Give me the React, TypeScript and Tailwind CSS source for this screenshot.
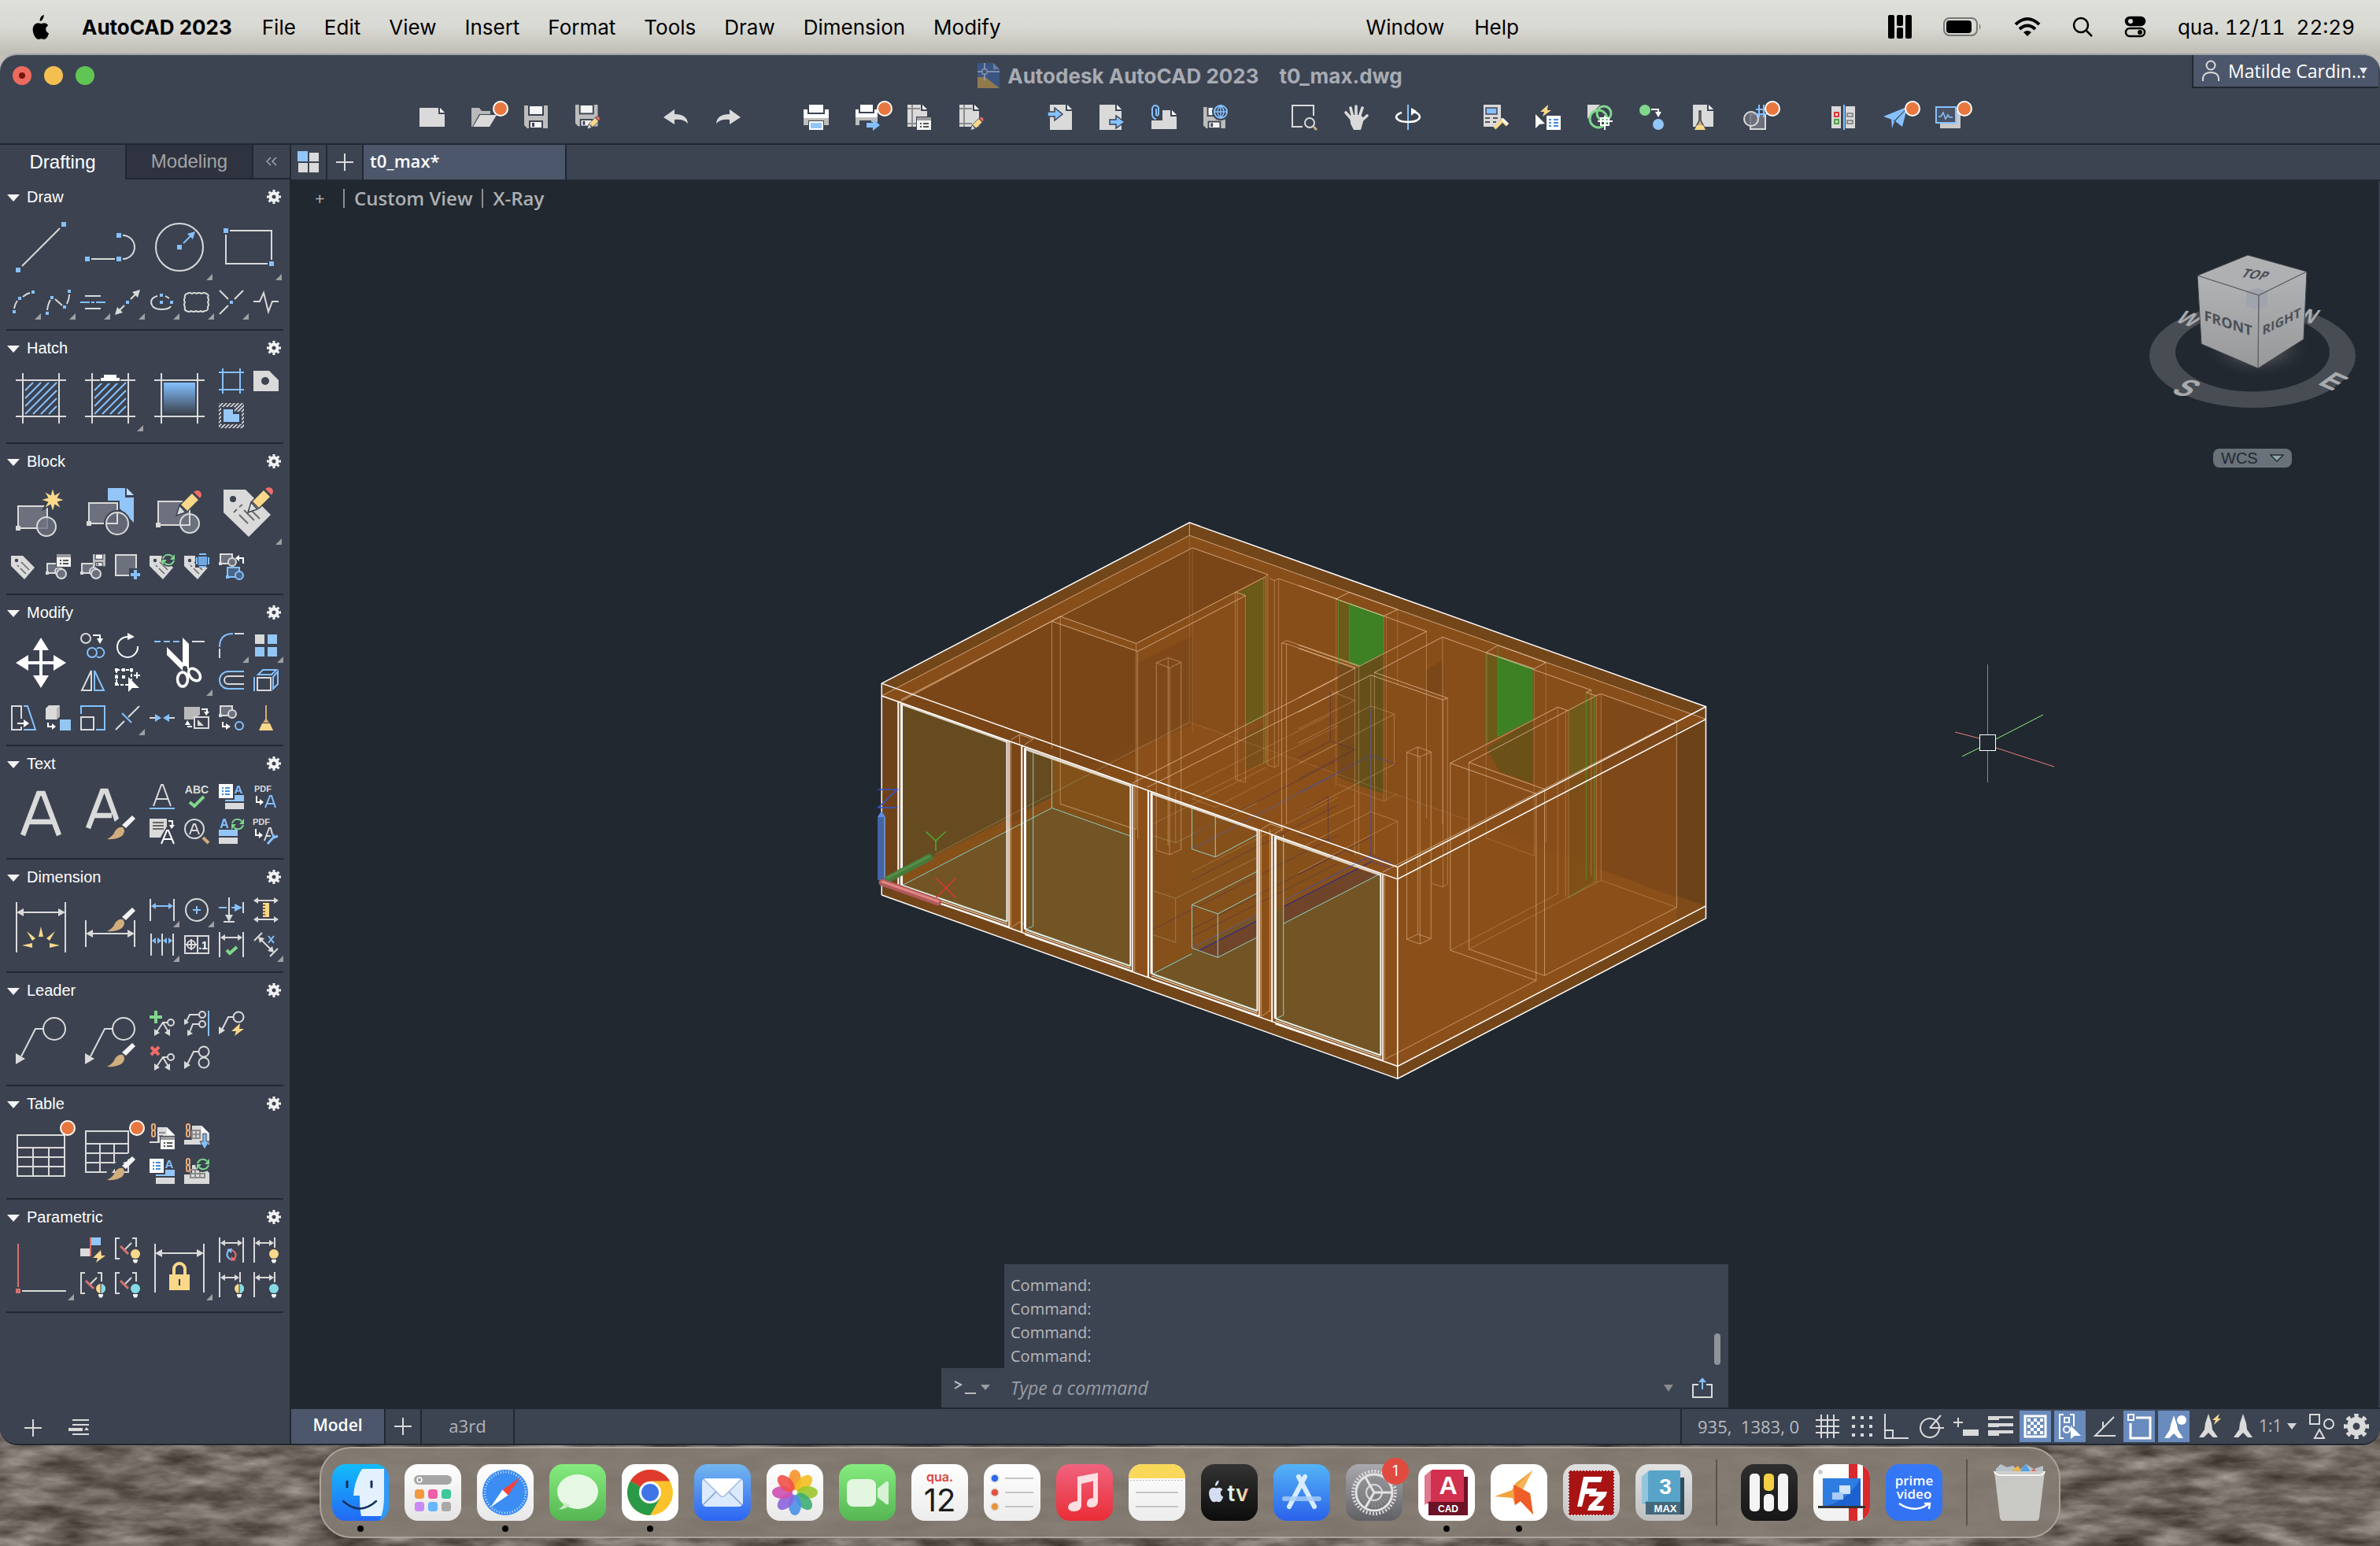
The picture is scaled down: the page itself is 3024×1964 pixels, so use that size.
import React from "react";

const LIGHT = "#dadada";
const BLUE = "#85c1ff";
const GOLD = "#f9d88a";
const GREEN = "#7fd78c";
const RED = "#ef6c69";
const PANEL = "#3c4351";
const GHOST = "#6d717e";

type Kids = { children?: React.ReactNode };

function Ico({ s = 32, children }: Kids & { s?: number }) {
  return (
    <svg viewBox={`0 0 ${s} ${s}`} width={s} height={s} fill="none" stroke={LIGHT} strokeWidth={2} aria-hidden="true" className="shrink-0 overflow-visible">
      {children}
    </svg>
  );
}

const L = ({ d, c = LIGHT, w = 2 }: { d: string; c?: string; w?: number }) => <path d={d} stroke={c} strokeWidth={w} />;
const F = ({ d, c = LIGHT }: { d: string; c?: string }) => <path d={d} fill={c} stroke="none" />;
const Sq = ({ x, y, c = BLUE, r = 3 }: { x: number; y: number; c?: string; r?: number }) => (
  <rect x={x - r} y={y - r} width={r * 2} height={r * 2} fill={c} stroke="none" />
);
const T = ({ x, y, s, c = LIGHT, b = 700, children }: Kids & { x: number; y: number; s: number; c?: string; b?: number }) => (
  <text x={x} y={y} fontSize={s} fill={c} stroke="none" fontWeight={b} textAnchor="middle" className="font-[Liberation_Sans,sans-serif]">
    {children}
  </text>
);
const Notice = ({ x, y }: { x: number; y: number }) => <circle cx={x} cy={y} r={9} fill="#e8773f" stroke="#fff" strokeWidth={2} />;

const Pencil = ({ x = 0, y = 0, k = 1 }: { x?: number; y?: number; k?: number }) => (
  <g transform={`translate(${x} ${y}) scale(${k})`} stroke={PANEL} strokeWidth={1.5}>
    <path d="M0 32 4 19 12 28Z" fill={LIGHT} />
    <path d="M5 18 20 3 29 12 14 27Z" fill={GOLD} />
    <path d="M21 2 Q26 -3 31 1 Q35 6 30 11Z" fill={RED} />
  </g>
);
const Brush = ({ x = 0, y = 0 }: { x?: number; y?: number }) => (
  <g transform={`translate(${x} ${y})`} stroke="none">
    <path d="M0 30 Q8 26 10 20 Q14 14 20 15 Q24 19 20 25 Q14 31 0 30Z" fill="#d0ad7c" />
    <path d="M19 12 32 0 36 4 24 16Z" fill="#f2f2f2" />
  </g>
);
const Refresh = ({ x, y, r = 7 }: { x: number; y: number; r?: number }) => (
  <g stroke={GREEN} strokeWidth={2}>
    <path d={`M${x - r} ${y - 1}A${r} ${r} 0 0 1 ${x + r - 2} ${y - 4}M${x + r} ${y + 1}A${r} ${r} 0 0 1 ${x - r + 2} ${y + 4}`} />
    <path d={`M${x + r + 1} ${y - 7}v7h-6ZM${x - r - 1} ${y + 7}v-7h6Z`} fill={GREEN} stroke="none" />
  </g>
);
const Tag = () => (
  <>
    <F d="M0 2H15L30 17 17 32 0 15Z" />
    <circle cx={7} cy={8} r={2.2} fill={PANEL} stroke="none" />
    <path d="M8 14 10 16M12 18 19 25M13 10 23 20" stroke="#6b6b6b" strokeWidth={1.6} />
  </>
);
const MiniBlock = ({ x = 0, y = 0, c = LIGHT, f = GHOST }: { x?: number; y?: number; c?: string; f?: string }) => (
  <g transform={`translate(${x} ${y})`} stroke={c}>
    <rect x={2} y={1} width={15} height={12} fill={f} />
    <circle cx={17} cy={11} r={5} fill={f} />
    <rect x={0} y={11} width={4} height={4} fill={c} stroke="none" />
  </g>
);
const Disk = ({ x = 0, y = 0, k = 1 }: { x?: number; y?: number; k?: number }) => (
  <g transform={`translate(${x} ${y}) scale(${k})`} stroke="none">
    <path d="M0 0H30V29H4L0 25Z" fill="#bdbdbd" />
    <rect x={6} y={0} width={18} height={12} fill="#f5f5f5" stroke={PANEL} strokeWidth={2} />
    <rect x={7} y={20} width={16} height={9} fill="#f5f5f5" stroke={PANEL} strokeWidth={2} />
    <rect x={10} y={22} width={3} height={5} fill={PANEL} />
  </g>
);
const Card = ({ x, y }: { x: number; y: number }) => (
  <g transform={`translate(${x} ${y})`} stroke="none">
    <rect x={-1} y={-1} width={20} height={18} fill={PANEL} />
    <rect width={18} height={16} fill="#f3f3f3" />
    <rect width={18} height={4} fill="#9b9b9b" />
    <path d="M4 7h2v2h-2zM8 7h7v2h-7zM4 11h2v2h-2zM8 11h7v2h-7z" fill="#555" />
  </g>
);
const Bulb = ({ x, y, two = false, c = GOLD }: { x: number; y: number; two?: boolean; c?: string }) => (
  <g stroke="none">
    <circle cx={x} cy={y} r={7.5} fill={PANEL} />
    <circle cx={x} cy={y} r={6} fill={c} />
    {two && <path d={`M${x} ${y - 6}A6 6 0 0 1 ${x} ${y + 6}Z`} fill="#84dbe6" />}
    {two && <rect x={x - 0.5} y={y - 6} width={1} height={12} fill={PANEL} />}
    <path d={`M${x - 3} ${y + 7}h6v2l-1.500 2.500h-3l-1.500-2.500Z`} fill="#f4f4f4" />
  </g>
);
const Chain = () => <path d="M3 2q0-2 2-2t2 2v3q0 3-2 3t-2 3v3q0 2 2 2t2-2v-3q0-3-2-3t-2-3Z" stroke="#e9ab7c" strokeWidth={2} />;
const Person = () => (
  <Ico s={28}>
    <circle cx={14} cy={7} r={5.5} />
    <path d="M4 27V23Q5 16 14 16T24 23V27" />
  </Ico>
);
const Gear = ({ s = 18, c = "#f2f2f2" }: { s?: number; c?: string }) => (
  <svg viewBox="0 0 18 18" width={s} height={s} fill="none" stroke={c} aria-hidden="true">
    <circle cx={9} cy={9} r={4.6} strokeWidth={4.2} />
    <circle cx={9} cy={9} r={7.6} strokeWidth={3} pathLength={16} strokeDasharray="1 1" strokeDashoffset={0.5} />
  </svg>
);
const DimBar = ({ y, x1, x2, h1, h2, c = LIGHT }: { y: number; x1: number; x2: number; h1: number; h2: number; c?: string }) => (
  <>
    <path d={`M${x1} ${h1}V${h2}M${x2} ${h1}V${h2}`} />
    <path d={`M${x1 + 4} ${y}H${x2 - 4}`} stroke={c} />
    <path d={`M${x1 + 1} ${y}l6-4v8ZM${x2 - 1} ${y}l-6-4v8Z`} fill={c} stroke="none" />
  </>
);
const Sheet = ({ x = 0, y = 0, w = 24, h = 30 }: { x?: number; y?: number; w?: number; h?: number }) => (
  <g transform={`translate(${x} ${y})`} stroke="none">
    <path d={`M0 0H${w - 8}V8H${w}V${h}H0Z`} fill={LIGHT} />
    <path d={`M${w - 6} 0L${w} 6H${w - 6}Z`} fill="#fff" />
  </g>
);
const Cloud = "M4 5q3-2 6 0q3-2 6 0q3-2 6 0q3-2 6 0q4 1 2 5q2 3 0 6q2 3 0 6q1 5-4 5q-3 2-5 0q-3 2-6 0q-3 2-6 0q-3 2-6 0q-3-1-2-5q-2-3 0-6q-2-3 0-6q-1-4 3-5Z";

type Tool = { n: string; i: React.ReactNode; big?: boolean; fly?: boolean; start?: boolean };
type Group = { title: string; rows: Tool[][] };

const hatchFrame = "M9 0V64M55 0V64M0 9H64M0 55H64";
const hatchLines = "M12 22 22 12M12 32 32 12M12 42 42 12M12 52 52 12M22 52 52 22M32 52 52 32M42 52 52 42";

const groups: Group[] = [
  {
    title: "Draw",
    rows: [
      [
        { n: "Line", big: true, i: <Ico s={64}><L d="M8 56 56 8" /><Sq x={3} y={61} /><Sq x={61} y={3} /></Ico> },
        { n: "Polyline", big: true, i: <Ico s={64}><L d="M8 47H38M48 47A15 15 0 0 0 48 17" /><Sq x={3} y={47} /><Sq x={43} y={47} /><Sq x={43} y={17} /></Ico> },
        { n: "Circle", big: true, fly: true, i: <Ico s={64}><circle cx={32} cy={32} r={30} /><L d="M37 27 47 17" c={BLUE} /><F d="M52 12 42 15 49 22Z" c={BLUE} /><Sq x={32} y={32} /></Ico> },
        { n: "Rectangle", big: true, fly: true, i: <Ico s={64}><L d="M8 11H61V48M56 53H3V16" /><Sq x={3} y={11} /><Sq x={61} y={53} /></Ico> },
      ],
      [
        { n: "Arc", fly: true, i: <Ico><L d="M4 24Q5 18 8 14M15 9Q20 5 24 4" /><Sq x={4} y={28} r={2} /><Sq x={11} y={11} r={2} /><Sq x={28} y={3} r={2} /></Ico> },
        { n: "Spline", fly: true, i: <Ico><L d="M2 26Q3 18 6 13M12 12 21 20M27 18Q30 12 30 6" /><Sq x={2} y={30} r={2} /><Sq x={8} y={10} r={2} /><Sq x={24} y={22} r={2} /><Sq x={30} y={2} r={2} /></Ico> },
        { n: "Multiline", fly: true, i: <Ico><L d="M6 8H26M6 24H26" /><L d="M0 16H12M14 16H18M20 16H32" c={BLUE} /></Ico> },
        { n: "Construction line", fly: true, i: <Ico><L d="M5 27 12 20M20 12 27 5" /><F d="M32 0 22 3 29 10ZM0 32 3 22 10 29Z" /><Sq x={16} y={16} r={2} /></Ico> },
        { n: "Ellipse", fly: true, i: <Ico><L d="M10 8Q2 10 2 16Q3 25 15 25Q25 25 27 21M20 8 25 11" /><Sq x={15} y={7} r={2} /><Sq x={15} y={16} r={2} /><Sq x={28} y={16} r={2} /></Ico> },
        { n: "Revision cloud", fly: true, i: <Ico><L d={Cloud} /></Ico> },
        { n: "Point", fly: true, i: <Ico><L d="M1 1 12 12M31 1 20 12M1 31 12 20" /><Sq x={16} y={16} r={2} /></Ico> },
        { n: "Break line", i: <Ico><L d="M0 15H8L13 4 19 28 24 15H32" /></Ico> },
      ],
    ],
  },
  {
    title: "Hatch",
    rows: [
      [
        { n: "Hatch", big: true, i: <Ico s={64}><L d={hatchFrame} /><L d={hatchLines} c={BLUE} /></Ico> },
        { n: "Hatch recent", big: true, fly: true, i: <Ico s={64}><L d={hatchFrame} /><L d={hatchLines} c={BLUE} /><rect x={19} y={1} width={26} height={12} fill={PANEL} stroke="none" /><F d="M24 2H40V6H44V10H20V6H24Z" c="#fff" /></Ico> },
        {
          n: "Gradient", big: true,
          i: (
            <Ico s={64}>
              <defs><linearGradient id="grad" x1="0" y1="0" x2="0" y2="1"><stop offset="0" stopColor={BLUE} /><stop offset="1" stopColor={PANEL} /></linearGradient></defs>
              <L d={hatchFrame} /><rect x={12} y={12} width={40} height={40} fill="url(#grad)" stroke="none" />
            </Ico>
          ),
        },
        { n: "Boundary", i: <Ico><L d="M5 0V32M27 0V32M0 5H32M0 27H32" c={BLUE} /></Ico> },
        { n: "Wipeout", i: <Ico><F d="M0 3H20L32 15V29H0Z" /><circle cx={15} cy={16} r={5} fill={PANEL} stroke="none" /></Ico> },
        {
          n: "Region",
          i: (
            <Ico>
              <defs><pattern id="rim" width="5" height="5" patternUnits="userSpaceOnUse"><path d="M-1 6 6 -1M-1 1 1 -1M4 6 6 4" stroke={LIGHT} strokeWidth={1.6} /></pattern></defs>
              <rect width={32} height={32} fill="url(#rim)" stroke="none" /><F d="M3 5H20V11H29V27H3Z" c={PANEL} /><F d="M6 8H18V14H26V24H6Z" c="#96c8f8" />
            </Ico>
          ),
        },
      ],
    ],
  },
  {
    title: "Block",
    rows: [
      [
        { n: "Create block", big: true, i: <Ico s={64}><rect x={3} y={25} width={37} height={28} fill={GHOST} /><Sq x={3} y={53} c={LIGHT} /><circle cx={39} cy={51} r={12} fill={GHOST} fillOpacity={0.8} /><path d="M47 0 50 10 59 5 54 14 64 17 54 20 59 29 50 24 47 34 44 24 35 29 40 20 30 17 40 14 35 5 44 10Z" fill={GOLD} stroke={PANEL} /></Ico> },
        { n: "Insert block", big: true, i: <Ico s={64}><F d="M29 2H51V14H62V46L44 28 29 20Z" c="#93c6f8" /><F d="M53 2 62 11H53Z" c="#c6e1ff" /><rect x={2} y={18} width={42} height={32} fill={PANEL} stroke="none" /><rect x={5} y={21} width={36} height={26} fill={GHOST} /><circle cx={41} cy={47} r={17} fill={PANEL} stroke="none" /><path d="M26 47H41V33" /><circle cx={41} cy={47} r={14} fill={GHOST} fillOpacity={0.8} /><L d="M41 33V47H27" /><Sq x={5} y={47} c={LIGHT} /></Ico> },
        { n: "Edit block", big: true, i: <Ico s={64}><rect x={5} y={19} width={40} height={30} fill={GHOST} /><Sq x={5} y={49} c={LIGHT} /><circle cx={45} cy={47} r={12} fill={GHOST} /><L d="M45 35V49H33" /><Pencil x={28} y={5} /></Ico> },
        { n: "Edit attributes", big: true, fly: true, i: <Ico s={64}><F d="M0 4H28L60 36 32 64 0 33Z" /><circle cx={12} cy={16} r={4} fill={PANEL} stroke="none" /><path d="M13 33 17 29M20 26 24 23M20 36 31 47M26 30 39 43M35 30 46 41" stroke="#6b6b6b" /><Pencil x={31} y={1} /></Ico> },
      ],
      [
        { n: "Define attribute", i: <Ico><Tag /></Ico> },
        { n: "Block palette", i: <Ico><MiniBlock x={0} y={11} /><circle cx={20} cy={25} r={6} fill={GHOST} /><Card x={14} y={0} /></Ico> },
        { n: "Write block", i: <Ico><MiniBlock x={0} y={11} /><circle cx={20} cy={25} r={6} fill={GHOST} /><Disk x={16} y={0} k={0.53} /></Ico> },
        { n: "Add block", i: <Ico><rect x={1} y={1} width={26} height={26} fill={GHOST} /><F d="M18 18H32V32H18Z" c={PANEL} /><F d="M24 20h4v4h4v4h-4v4h-4v-4h-4v-4h4Z" c={BLUE} /></Ico> },
        { n: "Sync attributes", i: <Ico><Tag /><circle cx={24} cy={7} r={9} fill={PANEL} stroke="none" /><Refresh x={24} y={7} /></Ico> },
        { n: "Attribute display", i: <Ico><Tag /><rect x={14} y={0} width={18} height={17} fill={PANEL} stroke="none" /><rect x={18} y={3} width={11} height={11} fill="#6ea9e6" stroke="none" /><L d="M19 0H28M19 16H28M16 4V13M31 4V13" c={BLUE} /></Ico> },
        { n: "Replace block", i: <Ico><MiniBlock x={0} y={-1} /><MiniBlock x={9} y={16} c={BLUE} f="#4a6687" /><L d="M25 5H31V12" c="#fff" /><F d="M26 1V9L21 5Z" c="#fff" /></Ico> },
      ],
    ],
  },
  {
    title: "Modify",
    rows: [
      [
        { n: "Move", big: true, i: <Ico s={64}><L d="M32 10V54M10 32H54" w={4} c="#fff" /><F d="M32 0 42 16H22ZM32 64 42 48H22ZM0 32 16 22V42ZM64 32 48 22V42Z" c="#fff" /></Ico> },
        { n: "Copy", i: <Ico><circle cx={7} cy={7} r={6} /><L d="M16 3H25V9" c="#fff" /><F d="M21 7H29L25 14Z" c="#fff" /><circle cx={15} cy={25} r={6} stroke={BLUE} /><L d="M21 20A6 6 0 1 1 21 30" c={BLUE} /></Ico> },
        { n: "Rotate", i: <Ico><L d="M29 17A13 13 0 1 1 17 5" c="#fff" /><F d="M16 0V9L25 5Z" c="#fff" /></Ico> },
        { n: "Trim", big: true, fly: true, i: <Ico s={64}><L d="M0 5H8M12 5H20M24 5H32" c={BLUE} /><L d="M48 5H64" /><F d="M36 0 44 8V40H36ZM16 12 38 34 36 42 16 22Z" c="#fff" /><ellipse cx={36} cy={53} rx={6.5} ry={9} stroke="#fff" strokeWidth={3.5} /><ellipse cx={51} cy={47} rx={6} ry={9} stroke="#fff" strokeWidth={3.5} transform="rotate(-42 51 47)" /><circle cx={39} cy={39} r={3} fill={PANEL} stroke="none" /></Ico> },
        { n: "Fillet", fly: true, i: <Ico><L d="M1 18Q1 1 18 1" c={BLUE} /><L d="M20 1H32M1 20V32" /></Ico> },
        { n: "Array", fly: true, i: <Ico><F d="M2 2H14V14H2Z" /><F d="M18 2H30V14H18ZM2 18H14V30H2ZM18 18H30V30H18Z" c="#93c6f5" /></Ico> },
        { n: "Mirror", i: <Ico><path d="M14 4V29H2Z" /><path d="M18 4V29H30Z" stroke={BLUE} /></Ico> },
        { n: "Stretch", i: <Ico><path d="M2 3H21V22H2Z" stroke="#fff" strokeDasharray="4 2" /><F d="M0 1h4v4h-4zM9 1h4v4h-4zM19 1h4v4h-4zM0 10h4v4h-4zM9 10h4v4h-4zM0 19h4v4h-4z" c="#fff" /><F d="M17 12V31L22 26H31Z" c="#fff" /><L d="M24 10H32M28 6V14" c="#fff" /></Ico> },
        { n: "Offset", i: <Ico><L d="M32 5H12A11 11 0 0 0 12 27H32" c={BLUE} /><L d="M32 11H12A5 5 0 0 0 12 21H32" /></Ico> },
        { n: "Explode", i: <Ico><rect x={5} y={13} width={17} height={16} /><path d="M6 9 12 3H29L23 9Z" stroke={BLUE} /><path d="M25 12 31 5V21L25 27ZM1 12V30" stroke={BLUE} /></Ico> },
      ],
      [
        { n: "Edit geometry", i: <Ico><path d="M13 17V1H1V31H13V27" /><path d="M16 1H21L31 31H16" stroke={BLUE} /><L d="M8 23H18" c="#fff" /><F d="M16 18 23 23 16 28Z" c="#fff" /></Ico> },
        { n: "Solid edit", i: <Ico><F d="M0 4 4 0H18V14L14 18H0Z" /><F d="M14 4 18 0V14L14 18Z" c="#b5b5b5" /><F d="M18 18H32V32H18Z" c="#93c6f0" /><L d="M3 22V27H9" c="#fff" /><F d="M8 23 13 27 8 31Z" c="#fff" /></Ico> },
        { n: "Scale", i: <Ico><L d="M1 11V1H31V31H20" c={BLUE} /><rect x={1} y={15} width={16} height={16} /></Ico> },
        { n: "Lengthen", fly: true, i: <Ico><L d="M1 31 12 20M17 15 31 1" /><L d="M9 10 21 22" c={BLUE} /></Ico> },
        { n: "Join", i: <Ico><L d="M0 16H8M24 16H32" /><F d="M7 11 15 16 7 21ZM25 11 17 16 25 21Z" c={BLUE} /></Ico> },
        { n: "Change space", i: <Ico><F d="M0 2H20V12L11 18H0Z" c="#b9b9b9" /><rect x={13} y={15} width={18} height={14} /><F d="M17 18V26H25Z" /><L d="M22 5H29V9M4 27H10" c="#fff" /><F d="M25 8H32L28 13ZM1 25 4 19 8 25Z" c="#fff" /></Ico> },
        { n: "Copy nested", i: <Ico><MiniBlock /><circle cx={26} cy={26} r={5} stroke={BLUE} /><L d="M5 21V27H10" c="#fff" /><F d="M9 23 15 27 9 31Z" c="#fff" /></Ico> },
        { n: "Purge", i: <Ico><L d="M16 0V18" c="#d0ad7c" /><F d="M16 16 20 22H12Z" c="#d0ad7c" /><F d="M11 23H21L25 32H7Z" c={GOLD} /></Ico> },
      ],
    ],
  },
  {
    title: "Text",
    rows: [
      [
        { n: "Multiline text", big: true, i: <Ico s={64}><path d="M9 59 29 6H35L55 59M16 42H48" strokeWidth={6.5} /></Ico> },
        { n: "Text style", big: true, i: <Ico s={64}><path d="M4 50 22 3H27L42 44M10 34H34" strokeWidth={6.5} /><path d="M26 64 34 48 62 26" stroke={PANEL} strokeWidth={5} /><Brush x={28} y={34} /></Ico> },
        { n: "Single line text", i: <Ico><L d="M5 28 15 1H17L27 28M9 19H23" /><L d="M0 31H32" c={BLUE} /></Ico> },
        { n: "Spell check", i: <Ico><T x={16} y={12} s={14}>ABC</T><L d="M7 23 13 28 25 16" c={GREEN} w={4} /></Ico> },
        { n: "Text frame", i: <Ico><rect width={18} height={18} fill="#fff" stroke="none" /><path d="M4 5H6M8 5H14M4 9H6M8 9H14M4 13H6M8 13H14" stroke="#3e8be0" /><T x={25} y={12} s={15} c={BLUE}>A</T><F d="M20 14H32V22H8V20H20Z" c="#93c6f8" /><F d="M8 24H32V32H8Z" /></Ico> },
        { n: "Import PDF text", i: <Ico><T x={12} y={10} s={11}>PDF</T><L d="M4 15V23H9" c="#fff" /><F d="M8 19 13 23 8 27Z" c="#fff" /><L d="M15 30 21 15H23L28 30M17 25H26" c={BLUE} /></Ico> },
        { n: "Convert text", i: <Ico><F d="M0 0H22V10L16 20 14 24H0Z" /><path d="M4 5H18M4 9H18M4 13H18" stroke="#666" /><L d="M24 3H29V9" c="#fff" /><F d="M25 8H32L28 13Z" c="#fff" /><L d="M15 32 22 15H24L31 32M18 26H28" c="#fff" /></Ico> },
        { n: "Find text", i: <Ico><circle cx={13} cy={13} r={12} /><L d="M7 20 12 7H14L19 20M9 15H17" /><L d="M24 24 31 31" c="#d0ad7c" w={4} /></Ico> },
        { n: "Update field", i: <Ico><T x={7} y={12} s={16} c={BLUE}>A</T><Refresh x={24} y={7} /><F d="M0 14H24V22H0Z" c="#93c6f8" /><F d="M0 24H24V32H0Z" /></Ico> },
        { n: "PDF settings", i: <Ico><T x={10} y={8} s={11}>PDF</T><L d="M3 13V21H8" c="#fff" /><F d="M7 17 12 21 7 25Z" c="#fff" /><L d="M14 28 20 12H22L24 20M16 22H22" /><L d="M18 32 27 22M25 20 26 24 31 22" c={BLUE} w={3} /></Ico> },
      ],
    ],
  },
  {
    title: "Dimension",
    rows: [
      [
        { n: "Dimension", big: true, i: <Ico s={64}><L d="M1 0V64M63 0V64M8 13H56" /><F d="M1 13 10 8V18ZM63 13 54 8V18Z" /><F d="M32 31 35 44H29ZM14 37 25 46 21 49ZM50 37 39 46 43 49ZM8 55 21 52V58ZM56 55 43 52V58Z" c={GOLD} /></Ico> },
        { n: "Dimension style", big: true, i: <Ico s={64}><L d="M1 23V57M63 23V57M8 40H56" /><F d="M1 40 10 35V45ZM63 40 54 35V45Z" /><Brush x={28} y={7} /></Ico> },
        { n: "Linear", fly: true, i: <Ico><DimBar y={11} x1={1} x2={31} h1={2} h2={30} c={BLUE} /></Ico> },
        { n: "Center mark", fly: true, i: <Ico><circle cx={16} cy={16} r={14} /><L d="M11 16H21M16 11V21" c={BLUE} /></Ico> },
        { n: "Ordinate", i: <Ico><L d="M13 0V24M6 31H20M31 6V20" /><F d="M8 22H18L13 31Z" /><L d="M0 13H10M16 13H22" c={BLUE} /><F d="M20 8 30 13 20 18Z" c={BLUE} /></Ico> },
        { n: "Dimension update", i: <Ico><L d="M4 4H28M4 28H28" /><F d="M0 4 6 0V8ZM32 4 26 0V8ZM0 28 6 24V32ZM32 28 26 24V32Z" /><F d="M12 7H20V25H12Z" c={GOLD} /><path d="M12 10H15M12 14H15M12 18H15M12 22H15" stroke="#8a6d33" /></Ico> },
        { n: "Continue", fly: true, i: <Ico><L d="M2 2V30M16 2V30M30 2V30" /><F d="M3 11 8 7V15ZM15 11 10 7V15ZM17 11 22 7V15ZM29 11 24 7V15Z" c={BLUE} /></Ico> },
        { n: "Tolerance", i: <Ico><rect x={1} y={5} width={30} height={22} /><L d="M17 5V27" /><circle cx={9} cy={16} r={5} /><L d="M2 16H16M9 9V23" /><T x={24} y={22} s={14} c="#fff">.1</T></Ico> },
        { n: "Inspect", i: <Ico><DimBar y={7} x1={1} x2={31} h1={0} h2={32} /><L d="M10 23 14 27 23 19" c={GREEN} w={4} /></Ico> },
        { n: "Oblique", fly: true, i: <Ico><L d="M1 11 11 1M21 31 31 21M10 10 22 22" /><F d="M6 6 14 8 8 14ZM26 26 18 24 24 18Z" /><L d="M19 5 26 14M26 5 19 14" c={BLUE} /></Ico> },
      ],
    ],
  },
  {
    title: "Leader",
    rows: [
      [
        { n: "Multileader", big: true, i: <Ico s={64}><circle cx={49} cy={17} r={14} /><L d="M35 17H25L7 52" /><F d="M0 48 12 55 0 62Z" /></Ico> },
        { n: "Leader style", big: true, i: <Ico s={64}><circle cx={49} cy={17} r={14} /><L d="M35 17H25L7 52" /><F d="M0 48 12 55 0 62Z" /><Brush x={28} y={35} /></Ico> },
        { n: "Add leader", i: <Ico><F d="M6 0h4v6h6v4h-6v6h-4v-6h-6v-4h6Z" c={GREEN} /><circle cx={27} cy={15} r={4} /><L d="M22 15H17L9 27M17 15 24 27" /><F d="M6 32V23L13 28ZM26 32V23L19 28Z" /></Ico> },
        { n: "Align leaders", i: <Ico><L d="M31 0V32" c={BLUE} /><circle cx={23} cy={5} r={4} /><circle cx={23} cy={17} r={4} /><L d="M19 5H7L3 13M19 17H11L7 27" /><F d="M0 18V10L6 15ZM4 32V24L11 29Z" /></Ico> },
        { n: "Leader edit", i: <Ico><circle cx={25} cy={8} r={6.500} /><L d="M18 8H12L4 24" /><F d="M0 30V20L8 25Z" /><F d="M27 16 16 26H22L20 32 32 23H26Z" c={GOLD} /></Ico> },
        { n: "Remove leader", start: true, i: <Ico><L d="M2 2 12 12M12 2 2 12" c={RED} w={4} /><circle cx={27} cy={15} r={4} /><L d="M22 15H17L9 27M17 15 24 27" /><F d="M6 32V23L13 28ZM26 32V23L19 28Z" /></Ico> },
        { n: "Collect leaders", i: <Ico><circle cx={25} cy={8} r={6.500} /><circle cx={25} cy={22} r={6.500} /><L d="M18 8H12L4 24" /><F d="M0 30V20L8 25Z" /></Ico> },
      ],
    ],
  },
  {
    title: "Table",
    rows: [
      [
        { n: "Table", big: true, i: <Ico s={64}><path d="M2 8H62V60H2ZM2 24H62M2 36H62M2 48H62M22 24V60M42 24V60" /><Notice x={66} y={-1} /></Ico> },
        { n: "Table style", big: true, i: <Ico s={64}><path d="M1 3H55V55H1ZM1 19H55M1 31H55M1 43H55M19 19V55M37 19V55" /><path d="M26 64 34 50 62 30" stroke={PANEL} strokeWidth={6} /><Brush x={28} y={35} /><Notice x={66} y={-1} /></Ico> },
        { n: "Data link", i: <Ico><F d="M10 4H22L32 14V24H0V22H10Z" /><F d="M22 4 32 14H22Z" c="#fff" /><path d="M12 11H20M12 15H17" stroke="#8b8b8b" /><Chain /><Card x={14} y={16} /></Ico> },
        { n: "Download link", i: <Ico><F d="M10 2H22L32 12V26H0V20H10Z" /><F d="M22 2 32 12H22Z" c="#fff" /><path d="M10 8H20V18H10ZM10 13H20M15 8V18" stroke="#8b8b8b" /><Chain /><path d="M24 12H28V22H32L26 32 20 22H24Z" fill={BLUE} stroke={PANEL} strokeWidth={1} /></Ico> },
        { n: "Extract data", start: true, i: <Ico><rect width={18} height={18} fill="#fff" stroke="none" /><path d="M4 5H6M8 5H14M4 9H6M8 9H14M4 13H6M8 13H14" stroke="#3e8be0" /><T x={25} y={12} s={15} c={BLUE}>A</T><F d="M20 14H32V22H8V20H20Z" c="#93c6f8" /><F d="M8 24H32V32H8Z" /></Ico> },
        { n: "Update table", i: <Ico><F d="M10 8H22L32 18V32H0V20H10Z" /><path d="M8 14H20V24H8ZM8 19H26V24H20M14 14V24" stroke="#8b8b8b" /><Chain /><circle cx={24} cy={7} r={10} fill={PANEL} stroke="none" /><Refresh x={24} y={7} /></Ico> },
      ],
    ],
  },
  {
    title: "Parametric",
    rows: [
      [
        { n: "Geometric constraint", big: true, fly: true, i: <Ico s={64}><L d="M3 2V57" c="#d6726e" /><L d="M8 62H64" /><Sq x={3} y={62} c="#d6726e" /></Ico> },
        { n: "Auto constrain", i: <Ico><F d="M0 14H12V24H0Z" /><F d="M14 0H26V10H14Z" c="#93c6f8" /><L d="M13 0V24" c="#d6726e" /><F d="M26 16 16 26H22L20 32 32 23H27Z" c={GOLD} /></Ico> },
        { n: "Show constraint", i: <Ico><L d="M6 1H1V27H6M22 1H27V12" /><L d="M7 11 17 21" c="#d6726e" w={3} /><L d="M13 15 21 7" /><Bulb x={26} y={21} /></Ico> },
        {
          n: "Dimensional constraint", big: true, fly: true,
          i: <Ico s={64}><L d="M1 2V64M63 2V64M8 14H56" /><F d="M1 14 10 9V19ZM63 14 54 9V19Z" /><path d="M25 42V34A7 7 0 0 1 39 34V42" stroke={GOLD} strokeWidth={4} /><F d="M19 41H45V61H19Z" c={GOLD} /><F d="M31 47H33V55H31Z" c="#333" /></Ico>,
        },
        { n: "Convert constraint", i: <Ico><DimBar y={7} x1={1} x2={31} h1={0} h2={32} /><L d="M15 28Q7 23 13 16" c={BLUE} /><F d="M10 15 17 14 16 20Z" c={BLUE} /><L d="M17 16Q25 21 19 28" c={RED} /><F d="M22 29 15 30 16 24Z" c={RED} /></Ico> },
        { n: "Show dimensions", i: <Ico><L d="M1 0V32M27 0V13M5 7H23" /><F d="M2 7 8 3V11ZM26 7 20 3V11Z" /><Bulb x={26} y={21} /></Ico> },
        { n: "Toggle constraints", i: <Ico><L d="M6 1H1V27H6M22 1H27V12" /><L d="M7 11 17 21" c="#d6726e" w={3} /><L d="M13 15 21 7" /><Bulb x={26} y={21} two /></Ico> },
        { n: "Hide constraints", i: <Ico><L d="M6 1H1V27H6M22 1H27V12" /><L d="M7 11 17 21" c="#d6726e" w={3} /><L d="M13 15 21 7" /><Bulb x={26} y={21} c="#84dbe6" /></Ico> },
        { n: "Toggle dimensions", i: <Ico><L d="M1 0V32M27 0V13M5 7H23" /><F d="M2 7 8 3V11ZM26 7 20 3V11Z" /><Bulb x={26} y={21} two /></Ico> },
        { n: "Hide dimensions", i: <Ico><L d="M1 0V32M27 0V13M5 7H23" /><F d="M2 7 8 3V11ZM26 7 20 3V11Z" /><Bulb x={26} y={21} c="#84dbe6" /></Ico> },
      ],
    ],
  },
];

const toolbar: { n: string; i: React.ReactNode }[][] = [
  [
    { n: "New", i: <Ico><Sheet x={0} y={4} w={32} h={24} /></Ico> },
    { n: "Open", i: <Ico><F d="M0 4H10L13 8H24V12H10L1 28H0Z" c="#b9b9b9" /><F d="M11 13H32L23 28H2Z" /><Notice x={37} y={5} /></Ico> },
    { n: "Save", i: <Ico><Disk x={1} y={1} /></Ico> },
    { n: "Save as", i: <Ico><Disk k={0.95} /><Pencil x={15} y={15} k={0.5} /></Ico> },
  ],
  [
    { n: "Undo", i: <Ico><F d="M0 16 14 6V12Q30 12 31 24 26 18 14 19V25Z" /></Ico> },
    { n: "Redo", i: <Ico><F d="M32 16 18 6V12Q2 12 1 24 6 18 18 19V25Z" /></Ico> },
  ],
  [
    { n: "Print", i: <Ico><F d="M7 0H25V10H7ZM0 6H5V12H27V6H32V17H0Z" c="#fff" /><F d="M0 17H32V26H26V20H6V26H0Z" c="#bdbdbd" /><F d="M7 21H25V32H7Z" c="#fff" /><F d="M9 23H23V30H9Z" c="#93c6f8" /></Ico> },
    { n: "Batch print", i: <Ico><F d="M6 0H22V9H6ZM0 6H4V11H24V6H28V16H0Z" c="#fff" /><F d="M0 16H28V22H20V20H5V26H0Z" c="#bdbdbd" /><F d="M14 23H22V18L31 26 22 33V29H14Z" c={BLUE} /><Notice x={37} y={5} /></Ico> },
    { n: "Page setup", i: <Ico><Sheet x={0} y={0} w={25} h={28} /><path d="M0 5H16M6 0V28M0 24H12" stroke="#8d8d8d" /><Card x={12} y={16} /></Ico> },
    { n: "Plot style", i: <Ico><Sheet x={0} y={0} w={25} h={28} /><path d="M0 5H16M6 0V28M0 24H16" stroke="#8d8d8d" /><Pencil x={14} y={16} k={0.52} /></Ico> },
  ],
  [
    { n: "Import", i: <Ico><Sheet x={3} y={0} w={28} h={32} /><path d="M0 9H9V4L19 12 9 20V15H0Z" fill={BLUE} stroke={PANEL} strokeWidth={1.5} /></Ico> },
    { n: "Export", i: <Ico><Sheet x={0} y={0} w={28} h={32} /><path d="M13 19H21V14L32 22 21 30V25H13Z" fill={BLUE} stroke={PANEL} strokeWidth={1.5} /></Ico> },
    { n: "Attach", i: <Ico><Sheet x={0} y={7} w={32} h={24} /><rect x={0} y={0} width={14} height={20} fill={PANEL} stroke="none" /><path d="M6 5V13Q9 15 9 11V4Q8 1 5 1T1 5V13Q2 18 6 18" stroke={BLUE} /></Ico> },
    { n: "Save to web", i: <Ico><Disk x={0} y={3} k={0.93} /><circle cx={22} cy={9} r={11} fill={PANEL} stroke="none" /><circle cx={22} cy={9} r={8} stroke={BLUE} /><path d="M14 9H30M22 1V17M22 1Q14 9 22 17Q30 9 22 1" stroke={BLUE} strokeWidth={1.5} /></Ico> },
  ],
  [
    { n: "Zoom window", i: <Ico><path d="M14 28H1V1H28V14" /><circle cx={23} cy={23} r={6} /><L d="M28 28 32 32" c="#d0ad7c" w={3} /></Ico> },
    { n: "Pan", i: <Ico><path d="M10 18 3 10M12 16 9 4M16 15V2M20 16 24 4M22 21 30 14" strokeWidth={3.6} strokeLinecap="round" /><F d="M8 14 12 13H22L26 18 22 32H13L9 24Z" /></Ico> },
    { n: "Orbit", i: <Ico><L d="M16 0V32" c={BLUE} /><path d="M8 10Q1 12 1 16Q3 22 16 22T31 16Q31 11 23 9" stroke="#fff" strokeWidth={2.5} /><F d="M20 4V14L27 8Z" c="#fff" /></Ico> },
  ],
  [
    { n: "Properties", i: <Ico><F d="M0 0H22V18L16 28H0Z" /><path d="M3 4H17V12H3Z" fill={BLUE} stroke="#445" strokeWidth={1.5} /><path d="M2 17H8M12 17H18M2 22H8M12 22H16" stroke="#555" /><path d="M14 30 24 20M22 18 30 26" stroke={GOLD} strokeWidth={4} /><path d="M24 18 31 25" stroke="#fff" strokeWidth={3} /></Ico> },
    { n: "Quick select", i: <Ico><F d="M0 12V30L5 25 12 24Z" c="#fff" /><F d="M16 0 6 9H11L9 15 20 7H15Z" c={GOLD} /><F d="M14 14H32V32H14Z" c="#fff" /><path d="M17 19H20M23 19H29M17 23H20M23 23H29M17 27H20M23 27H29" stroke="#3e8be0" /></Ico> },
    { n: "Geolocation", i: <Ico><F d="M0 0H16L0 18Z" /><circle cx={14} cy={18} r={11} stroke={GREEN} strokeWidth={3} /><circle cx={21} cy={11} r={9} stroke={GREEN} strokeWidth={3} /><L d="M13 21H32M22 14V32M17 17H27V26H17Z" c="#fff" /></Ico> },
    { n: "Match layer", i: <Ico><circle cx={7} cy={7} r={7} fill={GREEN} stroke="none" /><circle cx={24} cy={25} r={7} fill="#93c6f8" stroke="none" /><L d="M15 6H24V11" c="#fff" /><F d="M20 9H28L24 16Z" c="#fff" /></Ico> },
    { n: "Format painter", i: <Ico><Sheet x={2} y={0} w={26} h={28} /><path d="M10 8V20L4 32H18L12 20V8Z" fill="#d0ad7c" stroke={PANEL} strokeWidth={1.5} /><F d="M7 26H15L18 32H4Z" c={GOLD} /></Ico> },
    { n: "Count", i: <Ico><rect x={9} y={12} width={19} height={19} fill={GHOST} /><circle cx={10} cy={18} r={9} fill={GHOST} fillOpacity={0.8} /><L d="M20 0V16M26 0V16M16 6H30M16 12H30" c={BLUE} /><Notice x={37} y={5} /></Ico> },
  ],
  [
    { n: "Compare", i: <Ico><F d="M0 2H12V30H0ZM18 2H30V30H18Z" /><path d="M16 0V32" stroke={BLUE} /><rect x={4} y={10} width={5} height={5} stroke="#dd3b3b" /><rect x={4} y={19} width={5} height={5} stroke="#4fa343" /><path d="M20 11H27V15H20ZM20 20H27V24H20Z" stroke="#777" strokeWidth={1.5} /></Ico> },
    { n: "Share", i: <Ico><F d="M0 15 32 2 14 20ZM15 21 30 5 24 28ZM10 18 14 21 11 30Z" c={BLUE} /><Notice x={37} y={5} /></Ico> },
    { n: "Activity", i: <Ico><F d="M6 8H32V30H6Z" c="#c9c9c9" /><rect x={1} y={3} width={25} height={20} fill="#4a5263" stroke={BLUE} /><path d="M4 15H7L10 10 13 18 16 13 18 16H22" stroke={BLUE} strokeWidth={1.5} /><Notice x={37} y={5} /></Ico> },
  ],
];

function Sidebar() {
  return (
    <aside className="flex w-[370px] shrink-0 flex-col border-r-2 border-[#222831] bg-[#3c4250] font-['Liberation_Sans',sans-serif]">
      <div className="flex h-[44px] text-2xl" role="tablist">
        <button role="tab" aria-selected="true" className="w-[159px] text-white">Drafting</button>
        <button role="tab" aria-selected="false" className="flex-1 border-x-2 border-b-2 border-[#222831] bg-[#2f333f] text-[#a3a3a6]">Modeling</button>
        <button aria-label="Collapse palette" className="flex w-[46px] items-center justify-center border-b-2 border-[#222831]">
          <svg viewBox="0 0 14 12" width={14} height={12} fill="none" stroke="#a5a5a8" strokeWidth={1.5}><path d="M6 1 1 6 6 11M13 1 8 6 13 11" /></svg>
        </button>
      </div>
      {groups.map((g) => (
        <section key={g.title} className="mx-2 border-b-2 border-[#222831] pb-3">
          <header className="flex h-[42px] items-center gap-2 pt-[2px] pr-[3px] text-xl text-white">
            <svg viewBox="0 0 18 10" width={18} height={10} className="mt-1"><path d="M1 0H17L9 9Z" fill="#f4f4f4" /></svg>
            <h2 className="flex-1">{g.title}</h2>
            <button aria-label={`${g.title} settings`}><Gear /></button>
          </header>
          <div className="flex flex-col gap-1">
            {g.rows.map((row, ri) => (
              <div key={ri} className="grid auto-rows-[44px] grid-cols-8">
                {row.map((t) => (
                  <button
                    key={t.n}
                    aria-label={t.n}
                    className={`relative flex items-center justify-center ${t.big ? "col-span-2 row-span-2" : ""} ${t.start ? "col-start-5" : ""}`}
                  >
                    {t.i}
                    {t.fly && (
                      <svg viewBox="0 0 8 8" width={8} height={8} className={`absolute ${t.big ? "right-[2px] bottom-[2px]" : "right-0 bottom-0"}`}>
                        <path d="M8 0V8H0Z" fill="#9fa0a3" />
                      </svg>
                    )}
                  </button>
                ))}
              </div>
            ))}
          </div>
        </section>
      ))}
      <div className="mt-auto flex items-center gap-8 pb-[6px] pl-[30px]">
        <button aria-label="Add"><Ico s={24}><L d="M12 1V23M1 12H23" /></Ico></button>
        <button aria-label="List options"><Ico s={28}><L d="M6 4H27M6 10H27M6 22H27" /><L d="M1 16H19" w={4} /><F d="M21 17H27L24 13Z" /></Ico></button>
      </div>
    </aside>
  );
}

const Thin = ({ d, c = "#d9a878", o = 0.7, w = 1 }: { d: string; c?: string; o?: number; w?: number }) => (
  <path d={d} stroke={c} strokeOpacity={o} strokeWidth={w} fill="none" vectorEffect="non-scaling-stroke" />
);
const Face = ({ d, c, o = 1 }: { d: string; c: string; o?: number }) => <path d={d} fill={c} fillOpacity={o} />;

const windowQuads = [
  { x: 122, y: 533, x2: 467, y2: 631, b: 1013, b2: 1110 },
  { x: 532, y: 652, x2: 877, y2: 748, b: 1130, b2: 1228 },
  { x: 952, y: 770, x2: 1298, y2: 867, b: 1248, b2: 1347 },
  { x: 1363, y: 887, x2: 1708, y2: 985, b: 1367, b2: 1465 },
];

function Building() {
  return (
    <g>
      <g transform="translate(1100 640) scale(.38265 .4783)">
        <Face d="M53 477 1075 50 2790 539V1101L1766 1527 53 1039Z" c="#73461a" />
        <Face d="M53 510 1075 84 2790 572 1766 997Z" c="#884e1a" />
        <Face d="M107 525 1766 997V1494L107 1020Z" c="#884e1a" />
        <Face d="M1766 997 2693 577V1106L1766 1494Z" c="#884e1a" />
        <Face d="M53 510 107 525V1022L53 1039Z" c="#6e431a" />
        <Face d="M2693 605 2790 572V1068L2693 1045Z" c="#6c4218" />
        <Face d="M118 527 618 312 903 392V890L618 808 118 1013Z" c="#7b4617" />
        <Face d="M646 299 1085 117 1335 188 898 371Z" c="#7b4617" />
        <Face d="M1085 590 1085 350 898 425V865L646 797V720Z" c="#7e4818" />
        <Face d="M122 1013 1075 580 2790 1068 1766 1494Z" c="#925619" o={0.35} />
      </g>
      <g transform="translate(1650 640) scale(.35714 .4783)">
        <Face d="M1076 505 1345 575V1045L1076 972Z" c="#7f4818" />
        <Face d="M455 440 512 416V510L455 495Z" c="#7b4618" />
        <Face d="M141 253 180 265V424L141 412Z" c="#6b5a18" />
        <Face d="M180 263 303 297V397L214 432 180 424Z" c="#3e8024" />
        <Face d="M200 437 303 397V770L200 745Z" c="#65501a" />
        <Face d="M141 420 200 437V745L141 725Z" c="#75491a" />
        <Face d="M670 397 709 406V620L670 636Z" c="#6b5a18" />
        <Face d="M709 403 833 437V573L709 620Z" c="#3e8024" />
        <Face d="M670 650 833 573V742L715 712Z" c="#6b5018" />
        <Face d="M960 549 1052 511V693L960 728Z" c="#6f5a1a" />
        <Face d="M960 740 1052 700V1000L960 1046Z" c="#7a5018" o={0.8} />
      </g>
      <g transform="translate(1100 640) scale(.38265 .4783)">
        <Face d="M1234 238 1322 198V567L1261 592V244Z" c="#6b5a18" />
        <Face d="M1261 610 1322 585V685L1261 712Z" c="#7a4f19" />
        {windowQuads.map((q) => (
          <Face key={q.x} d={`M${q.x} ${q.y}L${q.x2} ${q.y2}V${q.b2}L${q.x} ${q.b}Z`} c="#735425" />
        ))}
        <Face d="M122 533 467 631V845L122 985Z" c="#664b21" />
        <Face d="M122 978 467 838V870L122 1010Z" c="#865019" />
        <Face d="M532 652 618 675V785L532 815Z" c="#664b21" />
        <Face d="M532 815 618 780V808L532 842Z" c="#865019" />
        <Face d="M618 675 877 748V882L618 808Z" c="#815119" />
        <Face d="M952 770 1298 867V1092L952 1248Z" c="#86501b" />
        <Face d="M1169 1205 1105 1187 1298 1108V1152Z" c="#704428" />
        <Face d="M1387 887 1703 985 1387 1115V1072L1363 1080V887Z" c="#86501b" />
        <Face d="M1387 1070 1630 970 1703 985 1387 1115Z" c="#704428" />

        <Thin d="M53 510 1075 84 2790 572M1075 50V84M118 520 1085 117 1335 188" c="#ecc9a4" />
        <Thin d="M110 527 618 312 903 392 1261 244 1227 234M646 299 898 371 1325 195 1335 188M646 299 618 312" c="#ecc9a4" />
        <Thin d="M1075 84V580M1085 117V610M1075 580 2000 840" o={0.25} />
        <Thin d="M618 312V650M646 299V797L898 865V371M903 392V890" o={0.6} />
        <Thin d="M618 670V808L877 882M122 1013 618 808M556 660V1122L532 1130" c="#8fd8cf" o={0.9} />
        <Thin d="M228 932 1075 580M646 797 877 860" c="#b0a070" o={0.5} />
        <Thin d="M965 422 1004 409 1047 421 1009 436ZM965 422V920L1009 932 1047 918V421M1009 436V932M1004 409V907" o={0.6} />
        <Thin d="M1227 234V732M1234 238V735M1261 244V740L1227 732M1329 195V690M1335 188V694M1357 204V700M1371 199V694L1357 700 1335 694" o={0.45} />
        <Thin d="M1322 198V690" c="#66a030" o={0.8} />
        <Thin d="M1341 198 1357 204 1371 199 1568 253M1381 370 1397 363 1640 430M1381 370 1397 372 1630 436M1381 370V870M1397 372V850" />
        <Thin d="M885 742 1568 462M935 753 1568 499" c="#ecc9a4" />
        <Thin d="M1029 768 1545 560M1083 783 1568 590M1161 806 1568 637M1083 783 1161 806M1083 978 1568 780M955 850 1330 700" o={0.35} />
        <Thin d="M955 882 1029 900V768M955 1028 1029 1048V1165L955 1145M1029 900 1298 795M1029 1048 1298 940" c="#a99a66" o={0.6} />
        <Thin d="M1083 1000 1568 800M955 1130 1568 880M1083 1130 1568 930M1083 1150 1568 955M1083 880 1568 680" c="#3a2a50" o={0.45} />
        <Thin d="M1083 917 1568 715M1083 1180 1298 1092M1387 1055 1680 935" c="#4a5fc0" o={0.7} />
        <Thin d="M1105 1187 1298 1108M1387 1070 1680 950" c="#1c1fa0" o={1} />
        <Thin d="M1083 807V917L1161 938V830M1161 938 1298 880M1083 1065 1169 1089V1205L1083 1180ZM1083 1065 1298 977M1169 1089 1298 1035M1169 1205 1298 1152M955 1248 1083 1195M1387 1115 1703 985M1387 880V1358L1363 1367" c="#8fd8cf" o={0.95} />
        <Thin d="M482 627 511 613 556 625 527 640M482 632V1127L511 1110 527 1118M511 613V640M893 742V1242M1313 865 1342 850 1387 862 1356 877M1313 870V1362M1342 865V1348M1313 1362 1342 1346" c="#ecc9a4" o={0.6} />

        {windowQuads.map((q) => (
          <g key={q.x}>
            <Thin d={`M${q.x - 14} ${q.y - 9}V${q.b + 9}`} c="#fff" o={1} w={2} />
            <Thin d={`M${q.x - 3} ${q.y - 4}V${q.b}`} c="#fff" o={1} w={3} />
            <Thin d={`M${q.x - 3} ${q.y - 1}L${q.x2 + 3} ${q.y2 + 1}`} c="#e8e2d8" o={0.9} w={3} />
            <Thin d={`M${q.x2 + 2} ${q.y2}V${q.b2}`} c="#fff" o={0.95} w={2} />
            <Thin d={`M${q.x2 + 9} ${q.y2}V${q.b2 + 14}`} c="#fff" o={0.8} w={2} />
            <Thin d={`M${q.x - 3} ${q.b}L${q.x2 + 3} ${q.b2}`} c="#dff3ee" o={1} w={2} />
            <Thin d={`M${q.x - 3} ${q.b + 6}L${q.x2 + 3} ${q.b2 + 6}`} c="#fff" o={0.9} w={1} />
            <Thin d={`M${q.x - 3} ${q.b + 14}L${q.x2 + 9} ${q.b2 + 14}`} c="#fff" o={1} w={2} />
          </g>
        ))}
      </g>
      <g transform="translate(1650 640) scale(.35714 .4783)">
        <Thin d="M0 217 455 339 215 432 0 375M0 384 200 437 0 515M0 553 257 455 514 521 530 516 270 448 512 354 1041 495 1023 501 1058 510 958 549 922 540 540 689 845 770M606 687 958 549M606 687 875 758M1059 509 1076 505 1345 577M300 978 1345 577" c="#ecc9a4" />
        <Thin d="M133 253 180 235 352 281 303 298ZM667 395 709 376 880 422 838 438Z" c="#ecc9a4" />
        <Thin d="M455 339V835M512 354V850M200 437V935M214 432V925M257 455V820M270 448V930M514 521V1018L530 1010V516M472 1008 514 1018" o={0.5} />
        <Thin d="M133 253V750M303 298V790L352 770M312 296V790M352 281V480M667 395V888L838 935V438M880 422V900M141 745 303 790" o={0.3} />
        <Thin d="M141 253V430M180 262V424M670 397V636M709 376V620M1023 501V1000M1052 510V1003L960 1046" c="#4fa02c" o={0.7} />
        <Thin d="M922 540V1036L540 1186M950 548V1044M960 548V1046M1041 493V990M1059 510V1007M1076 505V1000L606 1183M1076 1000 1345 1072" o={0.4} />
        <Thin d="M1345 577V1072L875 1253 606 1183V687M540 689V1186L845 1266V770M875 758V1253M845 1266 306 1476V985" c="#e5bf98" o={0.6} />
        <Thin d="M385 660 424 646 471 659 432 672ZM385 660V1157L432 1169 471 1155V659M432 672V1169M424 646V1143L385 1157M424 1143 471 1155" c="#e0b68c" o={0.6} />
        <Thin d="M0 635 257 537 340 558V690M0 690 340 559M0 824 340 692M0 598 200 522 113 498M0 917 257 818 352 843V955M0 980 352 843M0 870 200 800" o={0.45} />
        <Thin d="M0 675 113 630 200 653 0 730M113 498V630M0 825 105 777V893M0 880 105 893 200 935M0 985 257 885" c="#3a2a50" o={0.5} />
        <Thin d="M0 768 257 668 340 690M257 540V950L330 968M0 1035 257 935 330 955" c="#4a4390" o={0.8} />
        <Thin d="M352 965 1449 539V1101L352 1527ZM352 997 1449 572M352 1494 1449 1068" c="#fff" o={1} w={1.5} />
      </g>
      <g transform="translate(1100 640) scale(.38265 .4783)">
        <Thin d="M53 1039V477L1075 50 2790 539M53 477 1766 965M53 510 1766 997M53 1039 1766 1527M240 1059 1766 1494" c="#fff" o={1} w={1.5} />
      </g>
      {/* user coordinate system tripod */}
      <g strokeLinecap="round" fill="none">
        <path d="M1116 1003H1140L1116 1026H1140" stroke="#2f55dd" strokeWidth={1.5} />
        <path d="M1177 1057 1189 1068 1201 1057M1189 1068V1080" stroke="#4fae2f" strokeWidth={1.5} />
        <path d="M1190 1116 1214 1140M1214 1116 1190 1140" stroke="#d8372f" strokeWidth={1.5} />
        <path d="M1120 1118V1038" stroke="#4464a4" strokeWidth={10} strokeLinecap="butt" />
        <path d="M1115 1038 1120 1030 1125 1038Z" fill="#5d8de6" />
        <path d="M1124 1038V1118" stroke="#7089bb" strokeWidth={2} strokeLinecap="butt" />
        <path d="M1128 1117 1181 1089" stroke="#457a3a" strokeWidth={9} />
        <path d="M1128 1115 1180 1088" stroke="#578f4b" strokeWidth={3} />
        <path d="M1121 1121 1192 1146" stroke="#b0595b" strokeWidth={9} />
        <path d="M1121 1120 1192 1145" stroke="#e08784" strokeWidth={3} />
      </g>
    </g>
  );
}

function ViewCube() {
  return (
    <g>
      <defs>
        <linearGradient id="cubeF" x1="0" y1="0" x2="0" y2="1"><stop offset="0" stopColor="#b2b3b5" /><stop offset="1" stopColor="#97989a" /></linearGradient>
        <radialGradient id="cubeS"><stop offset="0.4" stopColor="#4a4c50" stopOpacity={0.9} /><stop offset="1" stopColor="#212830" stopOpacity={0} /></radialGradient>
      </defs>
      <path fillRule="evenodd" fill="#484d54" d="M2731 452a131 66 0 1 0 262 0a131 66 0 1 0-262 0ZM2764 447.500a98 50 0 1 0 196 0a98 50 0 1 0-196 0Z" />
      <ellipse cx={2868} cy={444} rx={70} ry={36} fill="url(#cubeS)" />
      <g fill="#a9abad" fontWeight={700} fontSize={34} textAnchor="middle" className="font-['Liberation_Sans',sans-serif]">
        <text transform="translate(2768 502) rotate(16) skewX(-34)">S</text>
        <text transform="translate(2954 492) rotate(24) skewX(-30)">E</text>
        <text fontSize={26} transform="translate(2774 412) rotate(18) skewX(-30)">W</text>
        <text fontSize={26} transform="translate(2929 410) rotate(6) skewX(-30)">N</text>
      </g>
      <path d="M2792 350 2856 324 2931 345 2870 375Z" fill="#afb0b2" />
      <path d="M2792 350 2870 375 2869 468 2797 437Z" fill="url(#cubeF)" />
      <path d="M2931 345 2927 431 2869 468 2870 375Z" fill="url(#cubeF)" />
      <path d="M2854 370 2868 366 2881 370V389L2868 393 2854 389Z" fill="#a0a4ac" />
      <path d="M2792 350 2870 375 2931 345M2870 375 2869 468" stroke="#5b5e63" strokeWidth={1.3} fill="none" />
      <path d="M2797 437 2792 350 2856 324 2931 345 2927 431 2869 468Z" stroke="#3a3f46" strokeWidth={1} fill="none" />
      <g fill="#4b5057" fontWeight={700} fontSize={18} textAnchor="middle" className="font-['Open_Sans',sans-serif]">
        <text transform="translate(2831 417) skewY(18)">FRONT</text>
        <text transform="translate(2899 414) skewY(-26)" fontSize={16}>RIGHT</text>
        <text transform="translate(2862 354) rotate(8) skewX(-28)" fontSize={16}>TOP</text>
      </g>
    </g>
  );
}

function Viewport() {
  return (
    <main className="relative min-h-0 flex-1 border-r-2 border-[#353c47] bg-[#212830]">
      <svg viewBox="370 230 2652 1558" preserveAspectRatio="xMinYMin meet" className="absolute inset-0 h-full w-full" role="img" aria-label="Isometric house model">
        <Building />
        <ViewCube />
        <g fill="none" strokeWidth={1}>
          <path d="M2525.500 844V933M2525.500 953V994" stroke="#7f7cf5" />
          <path d="M2484 930 2515 938M2536 950 2610 974" stroke="#ea8078" />
          <path d="M2493 961 2515 950M2536 939 2596 908" stroke="#8fee7c" />
          <rect x={2515.500} y={933.500} width={20} height={20} stroke="#fff" />
        </g>
      </svg>
      <nav className="absolute top-[6px] left-[30px] flex h-8 items-center gap-3 font-['Open_Sans',sans-serif] text-2xl font-semibold text-[#aeb0b3]">
        <button className="w-3 text-[22px] font-normal">+</button>
        <span className="ml-3 h-6 w-[2px] bg-[#8c8f93]" />
        <button>Custom View</button>
        <span className="h-6 w-[2px] bg-[#8c8f93]" />
        <button>X-Ray</button>
      </nav>
      <button className="absolute top-[340px] right-[110px] flex h-6 w-[100px] items-center justify-between rounded-lg bg-[#697179] px-[10px] font-['Liberation_Sans',sans-serif] text-xl leading-6 text-[#222930]">
        WCS
        <svg viewBox="0 0 18 10" width={18} height={10}><path d="M1 1H17L9 9Z" fill="#8ea6ad" stroke="#222930" strokeWidth={1.3} /></svg>
      </button>
      <section className="absolute bottom-0 left-1/2 flex w-[1000px] -translate-x-1/2 flex-col font-['Open_Sans',sans-serif]">
        <div className="ml-20 flex h-[132px] justify-between bg-[#3c4452] pt-3 pr-[10px] pl-2">
          <ul className="text-[20px] leading-[30px] text-[#b6b8bb]">
            <li>Command:</li>
            <li>Command:</li>
            <li>Command:</li>
            <li>Command:</li>
          </ul>
          <span className="mt-[76px] h-10 w-2 rounded-full bg-[#8f9299]" />
        </div>
        <label className="flex h-[50px] items-center bg-[#3c4452] pr-5 text-[#a9abae]">
          <span className="flex w-20 items-center gap-1 pl-4">
            <svg viewBox="0 0 30 18" width={30} height={18} fill="none" stroke="#bbb" strokeWidth={2}><path d="M1 1 9 5 1 10M14 16H28" /></svg>
            <svg viewBox="0 0 12 8" width={12} height={8}><path d="M0 0H12L6 7Z" fill="#9b9da1" /></svg>
          </span>
          <input placeholder="Type a command" className="min-w-0 flex-1 bg-transparent pl-2 text-[23px] italic outline-none placeholder:text-[#9b9da2]" />
          <svg viewBox="0 0 12 9" width={12} height={9}><path d="M0 0H12L6 9Z" fill="#8a8a8a" /></svg>
          <span className="ml-6"><Ico s={26}><path d="M8 9H1V25H25V9H18" /><L d="M13 15V3" c={BLUE} /><F d="M8 6 13 0 18 6Z" c={BLUE} /></Ico></span>
        </label>
      </section>
    </main>
  );
}

const Compass = () => <F d="M16 0 20 12 21 20 28 30H22L16 24 10 30H4L11 20 12 12Z" />;
const status: { n: string; on?: boolean; i: React.ReactNode }[] = [
  { n: "Grid", i: <Ico><L d="M8 1V31M16 1V31M24 1V31M1 8H31M1 16H31M1 24H31" /></Ico> },
  { n: "Snap", i: <Ico><path d="M3 5H30M3 16H30M3 27H30" strokeWidth={4} strokeDasharray="4 7" /></Ico> },
  { n: "Ortho", i: <Ico><L d="M1 0V31H31M2 21H11V31" /></Ico> },
  { n: "Polar", i: <Ico><circle cx={14} cy={18} r={12} /><L d="M14 18 28 2M14 18H32" /></Ico> },
  { n: "Dynamic input", i: <Ico><L d="M0 11H12M6 5V17" /><F d="M12 20H32V28H12Z" /></Ico> },
  { n: "Lineweight", i: <Ico><F d="M0 3H32V6H14V8H0ZM0 12H32V16H14V17H0ZM0 21H32V25H14V28H0Z" /></Ico> },
  { n: "Transparency", on: true, i: <Ico><rect x={3} y={3} width={26} height={26} stroke="#fff" strokeWidth={3} /><path d="M6 8H26M6 16H26M6 24H26" stroke="#fff" strokeWidth={4} strokeDasharray="4 4" /><path d="M10 12H26M10 20H26" stroke="#fff" strokeWidth={4} strokeDasharray="4 4" /></Ico> },
  { n: "Selection cycling", on: true, i: <Ico><path d="M8 1H3V31H8M16 1H21V16M9 5H15V11H9Z" stroke="#fff" /><circle cx={12} cy={20} r={4} stroke="#fff" /><F d="M17 15V32L22 28H30Z" c="#fff" /></Ico> },
  { n: "Isodraft", i: <Ico><L d="M28 4 4 28H30M14 18V10" /></Ico> },
  { n: "Object snap", on: true, i: <Ico><path d="M12 5H30V31H5V12" stroke="#fff" strokeWidth={3} /><rect x={2} y={1} width={7} height={7} stroke="#fff" /></Ico> },
  { n: "Annotation visibility", on: true, i: <Ico><F d="M16 2 20 14 21 20 28 31H22L16 25 10 31H4L11 20 12 14Z" c="#fff" /><circle cx={26} cy={8} r={6} fill="#fff" stroke="none" /></Ico> },
  { n: "Automatic scale", i: <Ico><Compass /><F d="M30 0 21 8H25L23 14 32 6H28Z" c={GOLD} /></Ico> },
  { n: "Annotation scale", i: <Ico><Compass /></Ico> },
];

function BottomBar() {
  return (
    <footer className="flex h-[46px] items-stretch border-t-2 border-[#222831] font-['Open_Sans',sans-serif] text-[22px]">
      <button className="w-[118px] bg-[#4d576b] pb-[2px] text-[21px] font-semibold text-white">Model</button>
      <button aria-label="New layout" className="flex w-12 items-center justify-center border-x-2 border-[#222831]"><Ico s={24}><L d="M12 1V23M1 12H23" /></Ico></button>
      <button className="w-[118px] border-r-2 border-[#222831] pb-[2px] text-[#b1b3b7]">a3rd</button>
      <span className="flex-1" />
      <div className="flex items-center gap-1 border-l-2 border-[#222831] pr-[10px] pl-5 text-[#b9bbbf]">
        <span className="w-[141px] whitespace-nowrap">935,&nbsp; 1383, 0</span>
        {status.map((s) => (
          <button key={s.n} aria-label={s.n} aria-pressed={!!s.on} className={`flex h-10 w-10 items-center justify-center ${s.on ? "bg-[#698bbd]" : ""}`}>{s.i}</button>
        ))}
        <button className="-ml-1 flex w-14 items-center gap-[6px] text-[21px]">
          1:1
          <svg viewBox="0 0 12 8" width={12} height={8}><path d="M0 0H12L6 8Z" fill="#d4d4d4" /></svg>
        </button>
        <button aria-label="Workspace" className="flex h-10 w-10 items-center justify-center"><Ico><rect x={1} y={1} width={12} height={12} /><circle cx={25} cy={13} r={6} /><path d="M13 20 19 31H7Z" /></Ico></button>
        <button aria-label="Settings" className="flex h-10 w-10 items-center justify-center"><Gear s={32} c="#dadada" /></button>
      </div>
    </footer>
  );
}

const Squircle = ({ id, a, b, children }: Kids & { id: string; a: string; b: string }) => (
  <svg viewBox="0 0 72 72" width={72} height={72} aria-hidden="true" className="overflow-visible">
    <defs>
      <linearGradient id={`g-${id}`} x1="0" y1="0" x2="0" y2="1"><stop offset="0" stopColor={a} /><stop offset="1" stopColor={b} /></linearGradient>
      <clipPath id={`c-${id}`}><rect width={72} height={72} rx={17} /></clipPath>
    </defs>
    <rect width={72} height={72} rx={17} fill={`url(#g-${id})`} />
    <g clipPath={`url(#c-${id})`}>{children}</g>
  </svg>
);

const petals = ["#f79226", "#f4bd20", "#9cc82c", "#3fae74", "#4a8fe8", "#8d63dc", "#cf50b0", "#ef5148"];
const applePath = "M17 5.500Q20 2 19.500-2Q15.500-1 14 3Q13 5.500 13.500 7.500Q16 7.500 17 5.500ZM26 14Q22 16.500 22.500 20.500Q23 24.500 27 26Q24 35 19.500 35Q17 34 15.500 34T11.500 35Q7 35 4 27Q1 18 5 13Q9 9 14 11Q15.500 11.500 17 11Q23 9 26 14Z";

type DockApp = { n: string; run?: boolean; i: React.ReactNode } | "divider";
const dock: DockApp[] = [
  { n: "Finder", run: true, i: <Squircle id="fi" a="#12bdfc" b="#2468f4"><path d="M38 6Q28 22 27 40H35Q35 56 37 66H66V6Z" fill="#e3f1ff" /><path d="M66 6H80V72H60Q66 60 66 40Z" fill="#2f9af8" /><path d="M19 22V29M50 22V29" stroke="#16305c" strokeWidth={3} strokeLinecap="round" /><path d="M14 47Q35 66 56 47" stroke="#16305c" strokeWidth={2.500} fill="none" strokeLinecap="round" /></Squircle> },
  { n: "Launchpad", i: <Squircle id="la" a="#ffffff" b="#e4e4e4"><rect x={12} y={14} width={48} height={12} rx={6} fill="#a5a5a5" /><circle cx={19} cy={20} r={3} fill="none" stroke="#fff" strokeWidth={1.5} />{["#f39a3e", "#ee5fa7", "#3fc79a", "#c98af5", "#66b6fb", "#a9a9a9"].map((c, i) => <rect key={c} x={13 + (i % 3) * 17} y={32 + Math.floor(i / 3) * 16} width={12} height={12} rx={3.500} fill={c} />)}</Squircle> },
  { n: "Safari", run: true, i: <Squircle id="sa" a="#ffffff" b="#e8e8e8"><circle cx={36} cy={36} r={29} fill="#3b8cf3" /><circle cx={36} cy={36} r={26} fill="none" stroke="#cfe4ff" strokeWidth={3} strokeDasharray="1 2.400" /><path d="M55 17 39.500 39.500 32.500 32.500Z" fill="#f5443e" /><path d="M17 55 39.500 39.500 32.500 32.500Z" fill="#fff" /></Squircle> },
  { n: "Messages", i: <Squircle id="me" a="#85ec7e" b="#55b553"><ellipse cx={36} cy={35} rx={26} ry={22} fill="#e6f8e3" /><path d="M18 48Q19 54 12 57Q21 58 26 52Z" fill="#c5ebc3" /></Squircle> },
  { n: "Chrome", run: true, i: <Squircle id="ch" a="#ffffff" b="#ffffff"><circle cx={36} cy={36} r={29} fill="#fcc22c" /><path d="M36 36 10.900 21.500A29 29 0 0 1 61.100 21.500H36Z" fill="#e03a2e" /><path d="M36 36 10.900 21.500A29 29 0 0 0 36 65L48.500 43.500Z" fill="#2a9a48" /><circle cx={36} cy={36} r={14} fill="#fff" /><circle cx={36} cy={36} r={11} fill="#3f74e6" /></Squircle> },
  { n: "Mail", i: <Squircle id="ma" a="#73b6ee" b="#2c65f3"><rect x={10} y={18} width={52} height={36} rx={5} fill="#dceafd" /><path d="M11 52 28 35M61 52 44 35" stroke="#7e9fd6" strokeWidth={1.5} /><path d="M12 19 33 40Q36 43 39 40L60 19" fill="#fff" stroke="#9cb8e6" strokeWidth={1.5} /></Squircle> },
  { n: "Photos", i: <Squircle id="ph" a="#ffffff" b="#e9e9e9">{petals.map((c, i) => <ellipse key={c} cx={36} cy={20} rx={8} ry={13} fill={c} fillOpacity={0.9} transform={`rotate(${i * 45} 36 36)`} />)}<circle cx={36} cy={36} r={3} fill="#fff" /></Squircle> },
  { n: "FaceTime", i: <Squircle id="fa" a="#85ec7e" b="#55b553"><rect x={10} y={19} width={37} height={35} rx={8} fill="#e3f6e0" /><path d="M49 31 60 22Q63 21 63 24V49Q63 52 60 51L49 42Z" fill="#d6f1d3" /></Squircle> },
  { n: "Calendar", i: <Squircle id="ca" a="#ffffff" b="#ececec"><text x={36} y={22} fontSize={16} fontWeight={600} fill="#e0453c" textAnchor="middle" className="font-[Inter,sans-serif]">qua.</text><text x={36} y={60} fontSize={40} fill="#1c1c1e" textAnchor="middle" className="font-[Inter,sans-serif]">12</text></Squircle> },
  { n: "Reminders", i: <Squircle id="re" a="#ffffff" b="#ececec">{["#2d69f1", "#e05341", "#ea923b"].map((c, i) => <g key={c}><circle cx={14} cy={18 + i * 18} r={5} fill={c} stroke="#ddd" strokeWidth={1.5} /><path d={`M27 ${18 + i * 18}H63`} stroke="#c5c5c5" strokeWidth={2} /></g>)}</Squircle> },
  { n: "Music", i: <Squircle id="mu" a="#f0637f" b="#ea2d36"><path d="M27 16 53 11V20L32 25V53Q31 60 23 60T15 54Q16 48 27 47ZM47 18H53V48Q52 55 45 55T39 49Q40 43 47 43Z" fill="#fbdfe2" /></Squircle> },
  { n: "Notes", i: <Squircle id="no" a="#ffffff" b="#ececec"><rect width={72} height={18} fill="#f9d85a" /><path d="M2 20.500H70" stroke="#b8b8b8" strokeDasharray="2 2" /><path d="M9 36H63M9 54H63" stroke="#c5c5c5" strokeWidth={2} /></Squircle> },
  { n: "TV", i: <Squircle id="tv" a="#333333" b="#0c0c0c"><defs><linearGradient id="tvg"><stop offset="0" stopColor="#fff" /><stop offset="0.350" stopColor="#b9e6df" /><stop offset="0.650" stopColor="#f3e7a8" /><stop offset="1" stopColor="#ef9fb0" /></linearGradient></defs><g transform="translate(8 22) scale(.75)"><path d={applePath} fill="#d4ddf2" /></g><text x={47} y={47} fontSize={28} fontWeight={600} fill="url(#tvg)" textAnchor="middle" className="font-[Inter,sans-serif]">tv</text></Squircle> },
  { n: "App Store", i: <Squircle id="as" a="#54b4f7" b="#2a61ea"><path d="M40 16 20 54M32 16 52 54" stroke="#d8ecff" strokeWidth={6} strokeLinecap="round" /><path d="M14 44H58" stroke="#aacdf9" strokeWidth={6} strokeLinecap="round" strokeOpacity={0.8} /></Squircle> },
  {
    n: "Settings",
    i: (
      <div className="relative">
        <Squircle id="se" a="#a9a9ae" b="#5f5f64"><circle cx={36} cy={36} r={27} fill="none" stroke="#dcdcde" strokeWidth={4} strokeDasharray="2 2.240" /><circle cx={36} cy={36} r={23} fill="none" stroke="#e3e3e5" strokeWidth={3} /><circle cx={36} cy={36} r={15} fill="none" stroke="#88888d" strokeWidth={9} strokeDasharray="2 1.500" /><circle cx={36} cy={36} r={10} fill="none" stroke="#d9d9dc" strokeWidth={2} /><path d="M36 36H58M36 36 25 17M36 36 25 55" stroke="#e3e3e5" strokeWidth={3} /></Squircle>
        <span className="absolute -top-2 -right-2 flex h-[34px] w-[34px] items-center justify-center rounded-full bg-[#e14b3f] font-['Inter',sans-serif] text-lg text-white">1</span>
      </div>
    ),
  },
  { n: "AutoCAD", run: true, i: <Squircle id="ac" a="#ffffff" b="#ffffff"><path d="M56 16H63V65H15V50Z" fill="#6f1228" /><path d="M8 15 18 7H58V50H8Z" fill="#d1304f" /><path d="M8 15 16 8V46L8 52Z" fill="#e1788e" /><path d="M13 48H58V65H13Z" fill="#6b1326" /><T x={38} y={38} s={32} c="#fff">A</T><T x={38} y={61} s={12} c="#fff">CAD</T></Squircle> },
  { n: "Star", run: true, i: <Squircle id="st" a="#ffffff" b="#ffffff"><path d="M53 8 41 32 50 37 54 64 38 47 31 52 28 43 5 41 27 33 32 24Z" fill="#f2a23d" /><path d="M29 26 50 37 54 64 38 47 31 52Z" fill="#ef5d2a" /><path d="M53 8 41 32 34 27Z" fill="#f5b458" /></Squircle> },
  { n: "FileZilla", i: <Squircle id="fz" a="#dfdfdf" b="#c6c6c6"><rect x={7} y={8} width={58} height={57} fill="#a81414" stroke="#dadada" strokeWidth={2} strokeDasharray="2 2" /><path d="M18 54 26 16H50L48 23H32L30 31H43L41 38H28L24 54ZM34 35H56L54 41 42 53H52L50 59H31L33 53 45 41H33Z" fill="#fff" /></Squircle> },
  { n: "3ds Max", i: <Squircle id="mx" a="#e3e3e3" b="#bfbfbf"><path d="M56 17H62V64H14V50Z" fill="#2f4f60" /><path d="M8 16 18 8H57V50H8Z" fill="#57a4c8" /><path d="M8 16 16 9V46L8 51Z" fill="#93c6dd" /><path d="M13 48H57V64H13Z" fill="#44687b" /><T x={38} y={38} s={28} c="#fff">3</T><T x={38} y={61} s={13} c="#fff">MAX</T></Squircle> },
  "divider",
  { n: "Bars", i: <Squircle id="ba" a="#2e2e2e" b="#161616"><rect x={11} y={12} width={13} height={48} rx={5} fill="#f4f4f4" /><rect x={47} y={12} width={13} height={48} rx={5} fill="#f4f4f4" /><rect x={29} y={12} width={13} height={22} rx={5} fill="#f3cf45" /><rect x={29} y={38} width={13} height={22} rx={5} fill="#f4f4f4" /></Squircle> },
  { n: "Parallels", i: <Squircle id="pa" a="#ffffff" b="#f0f0f0"><rect x={45} width={11} height={72} fill="#d9292d" /><rect x={63} width={9} height={72} fill="#d9292d" /><circle cx={9} cy={10} r={3} fill="#ccc" /><rect x={12} y={18} width={48} height={36} fill="#2e7de0" /><path d="M12 54Q44 48 60 18V54Z" fill="#1c61cf" /><rect x={33} y={27} width={14} height={11} fill="#cfe3fb" /><rect x={24} y={36} width={14} height={9} fill="#a9ccf6" /><rect x={6} y={53} width={60} height={3} fill="#333" /></Squircle> },
  { n: "Prime Video", i: <Squircle id="pv" a="#3578f6" b="#3272f2"><text x={36} y={27} fontSize={17} fontWeight={600} fill="#fff" textAnchor="middle" className="font-[Open_Sans,sans-serif]">prime</text><text x={36} y={44} fontSize={17} fontWeight={600} fill="#fff" textAnchor="middle" className="font-[Open_Sans,sans-serif]">video</text><path d="M17 50Q36 63 54 51M49 50H56L55 57" stroke="#fff" strokeWidth={2.500} fill="none" /></Squircle> },
  "divider",
  { n: "Trash", i: <svg viewBox="0 0 72 72" width={72} height={72}><path d="M6 6 12 0 20 4 28 2 34 10 44 0 54 6 66 2V12H6Z" fill="#b7c2c9" /><path d="M26 8 34 2 40 10Z" fill="#e9b54c" /><path d="M36 10 44 0 50 10Z" fill="#4da2e8" /><path d="M48 12 54 5 60 12Z" fill="#e26a63" /><path d="M4 9H68L61 68Q60 73 55 73H17Q12 73 11 68Z" fill="#cfcfcc" fillOpacity={0.92} /><path d="M4 9Q5 14 12 14H60Q67 14 68 9" stroke="#f5f5f5" strokeWidth={2} fill="none" /></svg> },
];

const MENUS = ["File", "Edit", "View", "Insert", "Format", "Tools", "Draw", "Dimension", "Modify"];

function MenuBar() {
  return (
    <nav className="flex h-[70px] items-center bg-linear-to-b from-[#dedfd8] via-[#d9d9d3] to-[#bdbcb4] pr-8 pb-[2px] pl-[38px] font-['Inter',sans-serif] text-[26px] text-black">
      <button aria-label="Apple menu" className="mr-[38px]"><svg viewBox="0 -3 30 38" width={28} height={32}><path d={applePath} /></svg></button>
      <button className="mr-[38px] font-bold">AutoCAD 2023</button>
      <div className="flex gap-9">{MENUS.map((m) => <button key={m}>{m}</button>)}</div>
      <div className="ml-[464px] flex gap-[38px]"><button>Window</button><button>Help</button></div>
      <div className="ml-auto flex items-center gap-10">
        <svg viewBox="0 0 30 30" width={30} height={30}><rect width={8} height={30} rx={2} /><rect x={22} width={8} height={30} rx={2} /><rect x={11} width={8} height={14} rx={2} /><rect x={11} y={16} width={8} height={14} rx={2} /></svg>
        <svg viewBox="0 0 50 24" width={50} height={24}><rect x={1} y={1} width={42} height={22} rx={7} fill="none" stroke="#777" strokeWidth={2} /><rect x={4} y={4} width={32} height={16} rx={4} /><path d="M46 8Q49 12 46 16Z" fill="#777" /></svg>
        <svg viewBox="0 0 34 26" width={34} height={26} fill="none" stroke="#000" strokeWidth={4}><path d="M2 10Q17-4 32 10M7 16Q17 7 27 16" /><path d="M17 25 12 20Q17 16 22 20Z" fill="#000" stroke="none" /></svg>
        <svg viewBox="0 0 26 26" width={26} height={26} fill="none" stroke="#000" strokeWidth={2.500}><circle cx={11} cy={11} r={9} /><path d="M18 18 25 25" /></svg>
        <svg viewBox="0 0 28 28" width={28} height={28} fill="none" stroke="#000" strokeWidth={2.500}><rect x={2} y={2} width={24} height={10} rx={5} fill="#000" /><circle cx={8} cy={7} r={3} fill="#ddd" stroke="none" /><rect x={2} y={16} width={24} height={10} rx={5} /><circle cx={20} cy={21} r={3} fill="#000" stroke="none" /></svg>
        <time className="whitespace-nowrap tabular-nums">qua. 12/11&nbsp; 22:29</time>
      </div>
    </nav>
  );
}

function TitleBar() {
  return (
    <header className="border-b-2 border-[#222831]">
      <div className="grid h-[52px] grid-cols-[1fr_auto_1fr] items-center">
        <div className="flex gap-4 pl-4">
          <button aria-label="Close" className="flex h-6 w-6 items-center justify-center rounded-full bg-[#ed6a5e]"><span className="h-2 w-2 rounded-full bg-[#7a150c]" /></button>
          <button aria-label="Minimise" className="h-6 w-6 rounded-full bg-[#f5bf4f]" />
          <button aria-label="Zoom" className="h-6 w-6 rounded-full bg-[#61c554]" />
        </div>
        <h1 className="flex items-center gap-[10px] font-['Inter',sans-serif] text-[26px] font-bold text-[#a8abb2]">
          <svg viewBox="0 0 28 32" width={28} height={32}><path d="M0 0H20L28 8V32H0Z" fill="#3a5583" /><path d="M20 0 28 8H20Z" fill="#6b7d9c" /><path d="M0 18H10L28 32H0Z" fill="#92794c" /><path d="M9 0V22M0 11H28" stroke="#9aa3b3" strokeWidth={1.5} /><rect x={6} y={8} width={6} height={6} fill="#3a5583" stroke="#9aa3b3" /></svg>
          <span>Autodesk AutoCAD 2023</span>
          <span className="ml-4">t0_max.dwg</span>
        </h1>
        <button className="mr-[2px] flex h-[42px] w-[237px] items-center gap-2 self-start justify-self-end border-b-2 border-l-2 border-[#222831] bg-[#4d576b] pl-2 font-['Open_Sans',sans-serif] text-[23px] whitespace-nowrap text-white">
          <Person />
          <span>Matilde Cardin...</span>
          <svg viewBox="0 0 10 8" width={10} height={8} className="-ml-4"><path d="M0 0H10L5 8Z" fill="#e5e7ea" /></svg>
        </button>
      </div>
      <div className="flex h-[60px] items-center justify-center gap-20 pb-[6px]">
        {toolbar.map((g, i) => (
          <div key={i} className="flex gap-[34px]">{g.map((t) => <button key={t.n} aria-label={t.n} className="h-8 w-8">{t.i}</button>)}</div>
        ))}
      </div>
    </header>
  );
}

export default function App() {
  return (
    <div className="flex h-screen flex-col bg-linear-to-b from-[#c9c8c1] to-[#695f55] to-50%">
      <MenuBar />
      <div className="relative z-10 -mt-[2px] flex min-h-0 flex-1 flex-col overflow-hidden rounded-[22px] border-y-2 border-t-[#9da2a9] border-b-[#222831] bg-[#3c4452]">
        <TitleBar />
        <div className="flex min-h-0 flex-1">
          <Sidebar />
          <div className="flex min-w-0 flex-1 flex-col">
            <div className="flex h-[46px] border-b-2 border-[#222831] font-['Open_Sans',sans-serif] text-[22px]">
              <button aria-label="Start" className="flex w-[46px] items-center justify-center border-r-2 border-[#222831]"><Ico s={28}><F d="M0 0H13V13H0Z" c="#93c6f8" /><F d="M15 2H27V13H15ZM1 15H13V27H1ZM15 15H27V27H15Z" /></Ico></button>
              <button aria-label="New tab" className="flex w-[46px] items-center justify-center border-r-2 border-[#222831]"><Ico s={24}><L d="M12 1V23M1 12H23" /></Ico></button>
              <button className="w-[258px] border-r-2 border-[#222831] bg-[#4d576b] pb-1 pl-2 text-left font-semibold text-white">t0_max*</button>
            </div>
            <Viewport />
            <BottomBar />
          </div>
        </div>
      </div>
      <div className="relative -mt-6 flex h-[152px] justify-center pt-[26px]">
        <svg className="absolute inset-0 h-full w-full" preserveAspectRatio="none" aria-hidden="true">
          <filter id="rock" x="0" y="0" width="100%" height="100%" colorInterpolationFilters="sRGB">
            <feTurbulence type="fractalNoise" baseFrequency="0.015 0.05" numOctaves={4} seed={7} />
            <feColorMatrix values="0.6 0 0 0 0.13  0.6 0 0 0 0.100  0.6 0 0 0 0.070  0 0 0 0 1" />
          </filter>
          <rect width="100%" height="100%" filter="url(#rock)" />
        </svg>
        <div className="relative flex h-[116px] items-start gap-5 rounded-[40px] border-2 border-[#aaa39b] bg-[#857c73]/90 px-[14px] pt-5">
          {dock.map((a, i) =>
            a === "divider" ? (
              <span key={i} className="flex w-[22px] justify-center"><span className="-mt-[6px] h-[84px] w-[2px] bg-[#5b544d]" /></span>
            ) : (
              <button key={a.n} aria-label={a.n} className="flex w-[72px] flex-col items-center gap-[6px]">
                {a.i}
                {a.run && <span className="h-2 w-2 rounded-full bg-black" />}
              </button>
            ),
          )}
        </div>
      </div>
    </div>
  );
}
